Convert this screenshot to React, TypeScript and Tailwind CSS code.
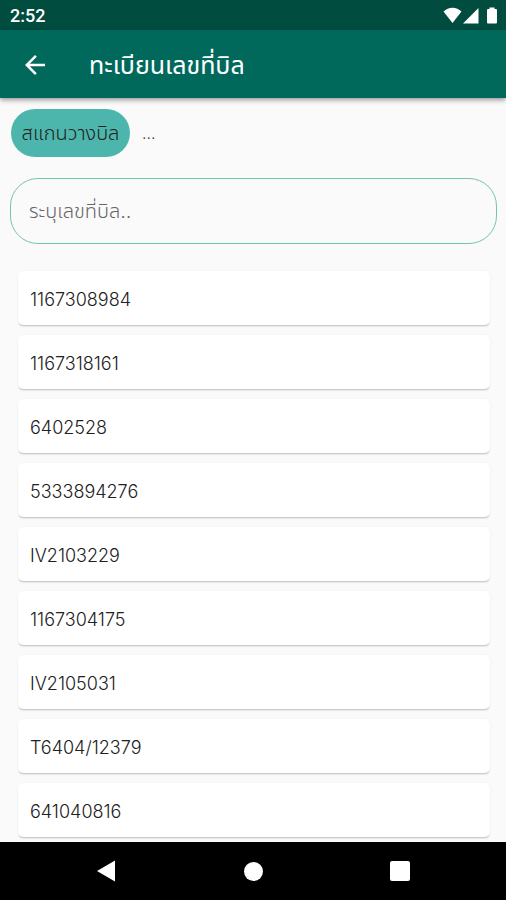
import { FC, useState } from "react";

const BILLS = [
  "1167308984",
  "1167318161",
  "6402528",
  "5333894276",
  "IV2103229",
  "1167304175",
  "IV2105031",
  "T6404/12379",
  "641040816",
];

const StatusBar: FC = () => (
  <div className="flex h-[30px] shrink-0 items-center justify-between bg-[#004d40] pt-px pr-2 pl-[10px] text-white">
    <span className="font-[Roboto,sans-serif] text-[18px] font-medium">2:52</span>
    <div className="flex items-center">
      <svg width="19" height="17" viewBox="0 0 19 17" fill="currentColor">
        <path d="M0.5 4.5C5.5-0.6 13.5-0.6 18.5 4.5L9.5 16Z" />
      </svg>
      <svg width="17" height="17" viewBox="0 0 17 17" fill="currentColor">
        <path d="M16.5 1V16.5H1Z" />
      </svg>
      <svg className="ml-[7px]" width="12" height="17" viewBox="0 0 12 17" fill="currentColor">
        <path d="M3.5 0.5h5v1.5h1.5q1 0 1 1v12.5q0 1-1 1h-8q-1 0-1-1v-12.5q0-1 1-1h1.5z" />
      </svg>
    </div>
  </div>
);

const AppBar: FC = () => (
  <header className="relative z-10 flex h-[68px] shrink-0 items-center bg-[#00695c] pt-px pl-5 text-white shadow-[0_2px_5px_rgba(0,0,0,0.4)]">
    <button type="button" aria-label="กลับ" className="flex size-[30px] items-center justify-center">
      <svg width="30" height="30" viewBox="0 0 24 24" fill="currentColor">
        <path d="M20 11H7.83l5.59-5.59L12 4l-8 8 8 8 1.41-1.41L7.83 13H20v-2z" />
      </svg>
    </button>
    <h1 className="ml-[39px] text-[25px] leading-8 font-normal">ทะเบียนเลขที่บิล</h1>
  </header>
);

const NavBar: FC = () => (
  <nav className="flex h-[58px] shrink-0 items-center justify-center bg-black text-white">
    <div className="flex w-[62%] items-center justify-between">
      <button type="button" aria-label="Back">
        <svg width="20" height="22" viewBox="0 0 20 22" fill="currentColor">
          <path d="M19 0.5V21.5L1 11Z" />
        </svg>
      </button>
      <button type="button" aria-label="Home" className="size-[19px] rounded-full bg-white" />
      <button type="button" aria-label="Overview" className="size-5 rounded-xs bg-white" />
    </div>
  </nav>
);

export default function App() {
  const [query, setQuery] = useState("");

  return (
    <div className="flex h-screen flex-col bg-[#fafafa] font-[Inter,'Noto_Sans_Thai','Noto_Sans',sans-serif] font-light text-[#212121]">
      <StatusBar />
      <AppBar />

      <main className="flex min-h-0 flex-1 flex-col overflow-hidden">
        <div className="flex items-center gap-3 px-[11px] pt-[11px]">
          <button
            type="button"
            className="h-12 w-[119px] rounded-full bg-[#4db6ac] text-[20px] whitespace-nowrap"
          >
            สแกนวางบิล
          </button>
          <span className="text-[16px] text-[#424242]">...</span>
        </div>

        <div className="pt-[21px] pr-[9px] pl-[10px]">
          <input
            type="text"
            aria-label="ระบุเลขที่บิล"
            placeholder="ระบุเลขที่บิล.."
            value={query}
            onChange={(e) => setQuery(e.target.value)}
            className="h-[66px] w-full rounded-[28px] border border-[#72c5b0] bg-transparent px-[18px] text-[20px] outline-none placeholder:text-[#666666]"
          />
        </div>

        <ul className="mt-[27px] flex flex-col gap-[10px] pr-4 pl-[18px]">
          {BILLS.filter((bill) => bill.includes(query)).map((bill) => (
            <li
              key={bill}
              className="flex h-[54px] items-center rounded-[5px] bg-white px-3 pt-[2px] text-[18px] shadow-[0_2px_2px_-1px_rgba(0,0,0,0.24),0_0_2px_rgba(0,0,0,0.06)]"
            >
              {bill}
            </li>
          ))}
        </ul>
      </main>

      <NavBar />
    </div>
  );
}
